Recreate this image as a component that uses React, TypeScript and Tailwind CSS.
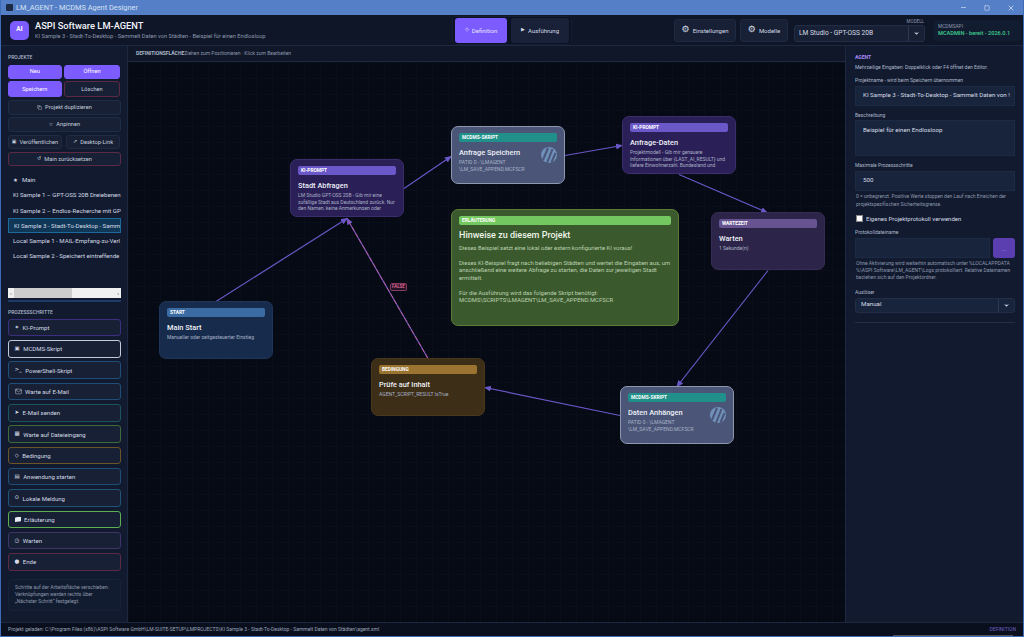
import { Mail, Minus, Square, X, ChevronDown, Copy } from "lucide-react";

const font = "font-['Roboto','Noto_Sans',sans-serif]";

const projects = [
  "KI Sample 1 – GPT-OSS 20B Dreiebenen",
  "KI Sample 2 – Endlos-Recherche mit GPT",
  "KI Sample 3 - Stadt-To-Desktop - Samm",
  "Local Sample 1 - MAIL-Empfang-zu-Verl",
  "Local Sample 2 - Speichert eintreffende",
];

const steps = [
  { icon: "✦", label: "KI-Prompt", border: "border-[#3d2f80]" },
  { icon: "▣", label: "MCDMS-Skript", border: "border-[#c4cad6]" },
  { icon: ">_", label: "PowerShell-Skript", border: "border-[#1f4f78]" },
  { icon: "mail", label: "Warte auf E-Mail", border: "border-[#1f4f78]" },
  { icon: "➤", label: "E-Mail senden", border: "border-[#1c5560]" },
  { icon: "▦", label: "Warte auf Dateieingang", border: "border-[#3f6b3a]" },
  { icon: "◇", label: "Bedingung", border: "border-[#6b5426]" },
  { icon: "▤", label: "Anwendung starten", border: "border-[#1f4f78]" },
  { icon: "⊙", label: "Lokale Meldung", border: "border-[#1f5478]" },
  { icon: "book", label: "Erläuterung", border: "border-[#5fae52]" },
  { icon: "◷", label: "Warten", border: "border-[#3f3468]" },
  { icon: "●", label: "Ende", border: "border-[#5c2a44]" },
];

const nodes = [
  {
    pos: "left-[31px] top-[239px]",
    box: "bg-[#172c4c] border-[#1f3557]",
    pill: "bg-[#3a6ca3]",
    tag: "START",
    title: "Main Start",
    desc: "Manueller oder zeitgesteuerter Einstieg",
  },
  {
    pos: "left-[162px] top-[97px]",
    box: "bg-[#2a1f56] border-[#3a2e6e]",
    pill: "bg-[#6a57c8]",
    tag: "KI-PROMPT",
    title: "Stadt Abfragen",
    desc: "LM Studio GPT-OSS 20B - Gib mir eine\nzufällige Stadt aus Deutschland zurück. Nur\nden Namen, keine Anmerkungen oder",
  },
  {
    pos: "left-[323px] top-[64px]",
    box: "bg-[#4a5578] border-[#8d97b0]",
    pill: "bg-[#22908a]",
    tag: "MCDMS-SKRIPT",
    title: "Anfrage Speichern",
    desc: "PATID 0 - \\LMAGENT\n\\LM_SAVE_APPEND.MCFSCR",
    script: true,
  },
  {
    pos: "left-[494px] top-[54px]",
    box: "bg-[#2a1f56] border-[#3a2e6e]",
    pill: "bg-[#6a57c8]",
    tag: "KI-PROMPT",
    title: "Anfrage-Daten",
    desc: "Projektmodell - Gib mir genauere\nInformationen über {LAST_AI_RESULT} und\nliefere Einwohnerzahl, Bundesland und",
  },
  {
    pos: "left-[583px] top-[150px]",
    box: "bg-[#2d2549] border-[#352c54]",
    pill: "bg-[#66538f]",
    tag: "WARTEZEIT",
    title: "Warten",
    desc: "1 Sekunde(n)",
  },
  {
    pos: "left-[243px] top-[296px]",
    box: "bg-[#3d2e18] border-[#4a381c]",
    pill: "bg-[#9a7430]",
    tag: "BEDINGUNG",
    title: "Prüfe auf Inhalt",
    desc: "AGENT_SCRIPT_RESULT IsTrue",
  },
  {
    pos: "left-[492px] top-[324px]",
    box: "bg-[#4a5578] border-[#8d97b0]",
    pill: "bg-[#22908a]",
    tag: "MCDMS-SKRIPT",
    title: "Daten Anhängen",
    desc: "PATID 0 - \\LMAGENT\n\\LM_SAVE_APPEND.MCFSCR",
    script: true,
  },
];

const edges = [
  [88, 239, 219, 156],
  [276, 126, 323, 94],
  [437, 93, 494, 83],
  [551, 112, 639, 150],
  [640, 208, 549, 324],
  [492, 353, 357, 325],
];

function SideButton({ children, className = "" }: { children: React.ReactNode; className?: string }) {
  return (
    <div
      className={`flex items-center justify-center gap-[3px] whitespace-nowrap rounded-[3px] border text-[5.7px] text-[#c6cfde] ${className}`}
    >
      {children}
    </div>
  );
}

function Label({ children, className = "" }: { children: React.ReactNode; className?: string }) {
  return <div className={`h-[8px] text-[5px] leading-[8px] text-[#aeb8cb] ${className}`}>{children}</div>;
}

function StepIcon({ icon }: { icon: string }) {
  if (icon === "mail") return <Mail size={7} strokeWidth={1.6} className="text-[#d5dbe6]" />;
  if (icon === "book")
    return (
      <svg viewBox="0 0 10 8" className="h-[5px] w-[6px]">
        <path d="M0 1 L4 0 L10 0 L10 7 L0 8 Z" fill="#e6ebf4" />
      </svg>
    );
  return <span className="font-['DejaVu_Sans',sans-serif] text-[5.5px] leading-none text-[#d5dbe6]">{icon}</span>;
}

function ScriptMark() {
  return (
    <svg viewBox="0 0 16 16" className="absolute right-[7px] top-[20px] h-[16px] w-[16px]">
      <circle cx="8" cy="8" r="8" fill="#6f90b8" />
      <path d="M2 13 L7 1 M6 16 L11.5 2 M10.5 15.5 L14.5 6" stroke="#4a5578" strokeWidth="2" />
    </svg>
  );
}

function FlowNode({ node }: { node: (typeof nodes)[number] }) {
  return (
    <div className={`absolute h-[58px] w-[114px] overflow-hidden rounded-[7px] border px-[7px] pt-[6px] ${node.pos} ${node.box}`}>
      <div className={`flex h-[9px] items-center rounded-[2px] px-[3px] text-[4.8px] font-bold text-white ${node.pill}`}>
        {node.tag}
      </div>
      <div className="mt-[5px] text-[7.4px] font-medium leading-[11px] text-[#eef1f7]">{node.title}</div>
      <div className="mt-[1px] max-h-[18px] overflow-hidden whitespace-pre text-[5px] leading-[6.6px] text-[#a9b1c6]">
        {node.desc}
      </div>
      {node.script && <ScriptMark />}
    </div>
  );
}

export default function App() {
  return (
    <div className={`relative flex h-[637px] w-[1024px] flex-col overflow-hidden border-x border-b border-[#3f6cb8] bg-[#0f1729] ${font}`}>
      <div className="flex h-[15px] shrink-0 items-center bg-[#5580c8] pl-[5px] pr-[8px]">
        <div className="h-[7px] w-[7px] rounded-[1px] bg-[#1c2a44]" />
        <span className="ml-[3px] text-[7.4px] text-[#d5e0f3]">LM_AGENT - MCDMS Agent Designer</span>
        <div className="ml-auto flex items-center gap-[17px] text-[#e8eef9]">
          <Minus size={7} />
          <Square size={6} />
          <X size={8} />
        </div>
      </div>

      <div className="flex h-[31px] shrink-0 items-center border-b border-[#1c2740] bg-[#0e1628]">
        <div className="ml-[9px] flex h-[19px] w-[19px] shrink-0 items-center justify-center rounded-[5px] bg-[#7c5cff] text-[6.5px] font-bold text-white">
          AI
        </div>
        <div className="ml-[6px] w-[417px] shrink-0">
          <div className="text-[9.3px] font-medium leading-[12px] text-[#f2f4f9]">ASPI Software LM-AGENT</div>
          <div className="text-[5.7px] leading-[8px] text-[#8e99ae]">
            KI Sample 3 - Stadt-To-Desktop - Sammelt Daten von Städten - Beispiel für einen Endlosloop
          </div>
        </div>
        <div className="flex h-[29px] w-[120px] shrink-0 items-center gap-[4px] rounded-[4px] border border-[#141d33] bg-[#0b1222] px-[2px]">
          <div className="flex h-[25px] w-[53px] items-center justify-center gap-[3px] rounded-[3px] bg-[#7c5cff] text-[6px] text-[#e8e4ff]">
            <span className="text-[5px]">◇</span> Definition
          </div>
          <div className="flex h-[25px] w-[59px] items-center justify-center gap-[3px] rounded-[3px] bg-[#182138] text-[6px] text-[#d5dbe6]">
            <span className="text-[5px]">▶</span> Ausführung
          </div>
        </div>
        <div className="ml-[102px] flex h-[23px] w-[62px] shrink-0 items-center justify-center gap-[3px] rounded-[3px] border border-[#1e2a42] bg-[#172035] text-[6px] text-[#d5dbe6]">
          <span className="font-['DejaVu_Sans',sans-serif] text-[9px]">⚙</span> Einstellungen
        </div>
        <div className="ml-[4px] flex h-[23px] w-[48px] shrink-0 items-center justify-center gap-[3px] rounded-[3px] border border-[#1e2a42] bg-[#172035] text-[6px] text-[#d5dbe6]">
          <span className="font-['DejaVu_Sans',sans-serif] text-[9px]">⚙</span> Modelle
        </div>
        <div className="relative mb-[3px] ml-[6px] flex h-[17px] w-[131px] shrink-0 items-center self-end rounded-[3px] border border-[#222e48] bg-[#172035] pl-[4px] text-[6.6px] text-[#d5dbe6]">
          LM Studio - GPT-OSS 20B
          <div className="ml-auto flex h-full w-[16px] items-center justify-center border-l border-[#2b3854]">
            <ChevronDown size={7} className="fill-[#c6cfde] text-[#c6cfde]" />
          </div>
          <span className="absolute -top-[7px] right-0 text-[4.5px] leading-[6px] text-[#8e99ae]">MODELL</span>
        </div>
        <div className="ml-[8px] h-[21px] w-[88px] shrink-0 rounded-[3px] bg-[#121c30] px-[5px] pt-[3px]">
          <div className="text-[4.8px] leading-[7px] text-[#8e99ae]">MCDMSAPI</div>
          <div className="whitespace-nowrap text-[5.6px] font-medium leading-[7px] text-[#3fd08f]">MCADMIN - bereit - 2026.0.1</div>
        </div>
      </div>

      <div className="flex min-h-0 flex-1">
        <aside className="flex w-[127px] shrink-0 flex-col border-r border-[#1c2740] bg-[#111a2e] pl-[7px] pr-[6px] pt-[7px]">
          <div className="h-[8px] text-[5px] font-medium leading-[8px] text-[#aeb8cb]">PROJEKTE</div>
          <div className="mt-[3.5px] grid grid-cols-[53.5px_56px] gap-[2.5px]">
            <SideButton className="h-[14px] border-[#7c5cff] bg-[#7c5cff] !text-white">Neu</SideButton>
            <SideButton className="h-[14px] border-[#7c5cff] bg-[#7c5cff] !text-white">Öffnen</SideButton>
            <SideButton className="h-[16px] border-[#7c5cff] bg-[#7c5cff] !text-white">Speichern</SideButton>
            <SideButton className="h-[16px] border-[#5c2a44] bg-[#172035]">Löschen</SideButton>
          </div>
          <div className="mt-[2.5px] flex flex-col gap-[2.8px]">
            <SideButton className="h-[15px] border-[#1f2c46] bg-[#172035]">
              <Copy size={5} /> Projekt duplizieren
            </SideButton>
            <SideButton className="h-[14.5px] border-[#1f2c46] bg-[#172035]">
              <span className="font-['DejaVu_Sans',sans-serif] text-[5px]">☆</span> Anpinnen
            </SideButton>
            <div className="flex gap-[4px]">
              <SideButton className="h-[14.5px] w-[54px] border-[#1f2c46] bg-[#172035]">
                <span className="font-['DejaVu_Sans',sans-serif] text-[5px]">▣</span> Veröffentlichen
              </SideButton>
              <SideButton className="h-[14.5px] w-[54px] border-[#1f2c46] bg-[#172035]">
                <span className="font-['DejaVu_Sans',sans-serif] text-[5px]">↗</span> Desktop-Link
              </SideButton>
            </div>
            <SideButton className="h-[14.5px] border-[#5c2a44] bg-[#172035]">
              <span className="font-['DejaVu_Sans',sans-serif] text-[5px]">↺</span> Main zurücksetzen
            </SideButton>
          </div>

          <div className="mt-[6px] h-[115.5px] overflow-hidden text-[6.1px] text-[#d5dbe6]">
            <div className="flex h-[15px] items-center gap-[4px] pl-[5px]">
              <span className="font-['DejaVu_Sans',sans-serif] text-[5.5px]">★</span> Main
            </div>
            {projects.map((name, i) => (
              <div
                key={name}
                className={`flex h-[15.2px] items-center overflow-hidden whitespace-nowrap pl-[5px] ${
                  i === 2 ? "border border-[#1c6a9c] bg-[#113757] pl-[4px]" : ""
                }`}
              >
                {name}
              </div>
            ))}
          </div>

          <div className="flex h-[10px] items-center justify-between bg-[#f0f0f0] px-[2px] text-[6px] text-[#606060]">
            <span>‹</span>
            <div className="ml-[2px] mr-auto h-full w-[58px] bg-[#cdcdcd]" />
            <span>›</span>
          </div>
          <div className="mt-[2px] h-[2px] bg-[#1e3a66]" />
          <div className="mt-[6px] h-[8px] text-[5px] font-medium leading-[8px] text-[#aeb8cb]">PROZESSSCHRITTE</div>
          <div className="mt-[3px] flex flex-col gap-[3.8px]">
            {steps.map((step) => (
              <div
                key={step.label}
                className={`flex h-[17.5px] items-center gap-[3.5px] rounded-[3px] border bg-[#172035] pl-[5.5px] text-[6px] text-[#d5dbe6] ${step.border}`}
              >
                <StepIcon icon={step.icon} />
                {step.label}
              </div>
            ))}
          </div>
          <div className="mt-[8.5px] h-[32px] rounded-[3px] border border-[#172238] bg-[#121c30] px-[6px] pt-[3.5px] text-[5px] leading-[7px] text-[#8e99ae]">
            Schritte auf der Arbeitsfläche verschieben. Verknüpfungen werden rechts über „Nächster Schritt“ festgelegt.
          </div>
        </aside>

        <main className="flex min-w-0 flex-1 flex-col">
          <div className="flex h-[16px] shrink-0 items-center border-b border-[#1c2740] bg-[#0f1729] pl-[8px] text-[5px] text-[#8e99ae]">
            <span className="font-bold text-[#aeb8cb]">DEFINITIONSFLÄCHE</span>
            Ziehen zum Positionieren · Klick zum Bearbeiten
          </div>
          <div className="relative flex-1 overflow-hidden bg-[#060a14] bg-[linear-gradient(#090e1a_1px,transparent_1px),linear-gradient(90deg,#090e1a_1px,transparent_1px)] bg-[size:16px_16px]">
            <svg className="absolute inset-0 h-full w-full" viewBox="0 0 717 559">
              <defs>
                <marker id="arrow" markerWidth="7" markerHeight="6" refX="6" refY="3" orient="auto" markerUnits="userSpaceOnUse">
                  <path d="M0 0 L7 3 L0 6 Z" fill="#6a57c8" />
                </marker>
              </defs>
              {edges.map(([x1, y1, x2, y2]) => (
                <line key={`${x1}-${y1}`} x1={x1} y1={y1} x2={x2} y2={y2} stroke="#6a57c8" strokeWidth="1.2" markerEnd="url(#arrow)" />
              ))}
              <line x1="300" y1="296" x2="219" y2="156" stroke="#6a57c8" strokeWidth="1.2" markerEnd="url(#arrow)" />
              <line x1="300" y1="296" x2="219" y2="156" stroke="#d0608c" strokeWidth="0.8" strokeDasharray="5 2" />
            </svg>

            {nodes.map((node) => (
              <FlowNode key={node.title} node={node} />
            ))}

            <div className="absolute left-[323px] top-[147px] h-[117px] w-[228px] rounded-[7px] border border-[#5d7a36] bg-[#3a5a2d] px-[7px] pt-[6px]">
              <div className="flex h-[9px] items-center rounded-[2px] bg-[#74c860] px-[3px] text-[4.8px] font-bold text-white">
                ERLÄUTERUNG
              </div>
              <div className="mt-[5px] text-[9px] font-medium leading-[11px] text-[#eef4ea]">Hinweise zu diesem Projekt</div>
              <div className="mt-[3.5px] whitespace-pre-line text-[5.9px] leading-[7.5px] text-[#bcd0b0]">
                {"Dieses Beispiel setzt eine lokal oder extern konfigurierte KI voraus!\n\nDieses KI-Beispiel fragt nach beliebigen Städten und wertet die Eingaben aus, um\nanschließend eine weitere Abfrage zu starten, die Daten zur jeweiligen Stadt\nermittelt.\n\nFür die Ausführung wird das folgende Skript benötigt:\nMCDMS\\SCRIPTS\\LMAGENT\\LM_SAVE_APPEND.MCFSCR"}
              </div>
            </div>

            <div className="absolute left-[262px] top-[221px] flex h-[8px] w-[17px] items-center justify-center rounded-[2px] border border-[#8a3a60] bg-[#241228] text-[4.5px] font-medium text-[#ee6e98]">
              FALSE
            </div>
          </div>
        </main>

        <aside className="w-[178px] shrink-0 border-l border-[#1c2740] bg-[#111a2e] pl-[9px] pr-[8px] pt-[7px]">
          <div className="h-[8px] text-[5px] font-bold leading-[8px] text-[#a78bfa]">AGENT</div>
          <Label className="mt-[2px] whitespace-nowrap text-[#8e99ae]">Mehrzeilige Eingaben: Doppelklick oder F4 öffnet den Editor.</Label>
          <Label className="mt-[5px]">Projektname - wird beim Speichern übernommen</Label>
          <div className="mt-[2px] flex h-[20px] items-center overflow-hidden whitespace-nowrap border border-[#1c2a44] bg-[#18243c] pl-[7px] text-[6.2px] text-[#d5dbe6]">
            KI Sample 3 - Stadt-To-Desktop - Sammelt Daten von !
          </div>
          <Label className="mt-[5px]">Beschreibung</Label>
          <div className="mt-[1px] h-[36px] border border-[#1c2a44] bg-[#18243c] pl-[7px] pt-[5px] text-[6.2px] leading-[9px] text-[#d5dbe6]">
            Beispiel für einen Endlosloop
          </div>
          <Label className="mt-[5px]">Maximale Prozessschritte</Label>
          <div className="mt-[2px] flex h-[20px] items-center border border-[#1c2a44] bg-[#18243c] pl-[7px] text-[6.2px] text-[#d5dbe6]">
            500
          </div>
          <div className="mt-[1px] h-[16px] pl-[1px] text-[5px] leading-[8px] text-[#8e99ae]">
            0 = unbegrenzt. Positive Werte stoppen den Lauf nach Erreichen der projektspezifischen Sicherheitsgrenze.
          </div>
          <div className="mt-[6px] flex h-[8px] items-center gap-[3px] pl-[1px] text-[6px] text-[#d5dbe6]">
            <div className="h-[7px] w-[7px] border border-[#888] bg-white" />
            Eigenes Projektprotokoll verwenden
          </div>
          <Label className="mt-[6px]">Protokolldateiname</Label>
          <div className="mt-[2px] flex h-[20px] gap-[3px]">
            <div className="h-full w-[135px] border border-[#1c2a44] bg-[#18243c]" />
            <div className="flex h-full w-[22px] items-center justify-center rounded-[3px] bg-[#5b3fb0] text-[6px] text-[#b9a8f0]">...</div>
          </div>
          <div className="mt-[1.5px] h-[21px] whitespace-pre-line pl-[1px] text-[5px] leading-[7px] text-[#8e99ae]">
            {"Ohne Aktivierung wird weiterhin automatisch unter %LOCALAPPDATA\n%\\ASPI Software\\LM_AGENT\\Logs protokolliert. Relative Dateinamen\nbeziehen sich auf den Projektordner."}
          </div>
          <Label className="mt-[7px]">Auslöser</Label>
          <div className="mt-[2px] flex h-[15px] items-center rounded-[3px] border border-[#222e48] bg-[#18243c] pl-[5px] text-[6.2px] text-[#d5dbe6]">
            Manual
            <div className="ml-auto flex h-full w-[16px] items-center justify-center border-l border-[#2b3854]">
              <ChevronDown size={7} className="fill-[#c6cfde] text-[#c6cfde]" />
            </div>
          </div>
          <div className="mt-[9px] h-px bg-[#24304a]" />
        </aside>
      </div>

      <div className="flex h-[14px] shrink-0 items-center border-t border-[#1c2740] bg-[#0a0f1e] px-[7px] text-[5px] text-[#9aa5b8]">
        Projekt geladen: C:\Program Files (x86)\ASPI Software GmbH\LM-SUITE-SETUP\LMPROJECTS\KI Sample 3 - Stadt-To-Desktop - Sammelt Daten von Städten\agent.xml
        <span className="ml-auto text-[#6a5fc0]">DEFINITION</span>
      </div>
      <div className="absolute bottom-0 right-[10px] h-px w-[120px] bg-[#555]" />
    </div>
  );
}
